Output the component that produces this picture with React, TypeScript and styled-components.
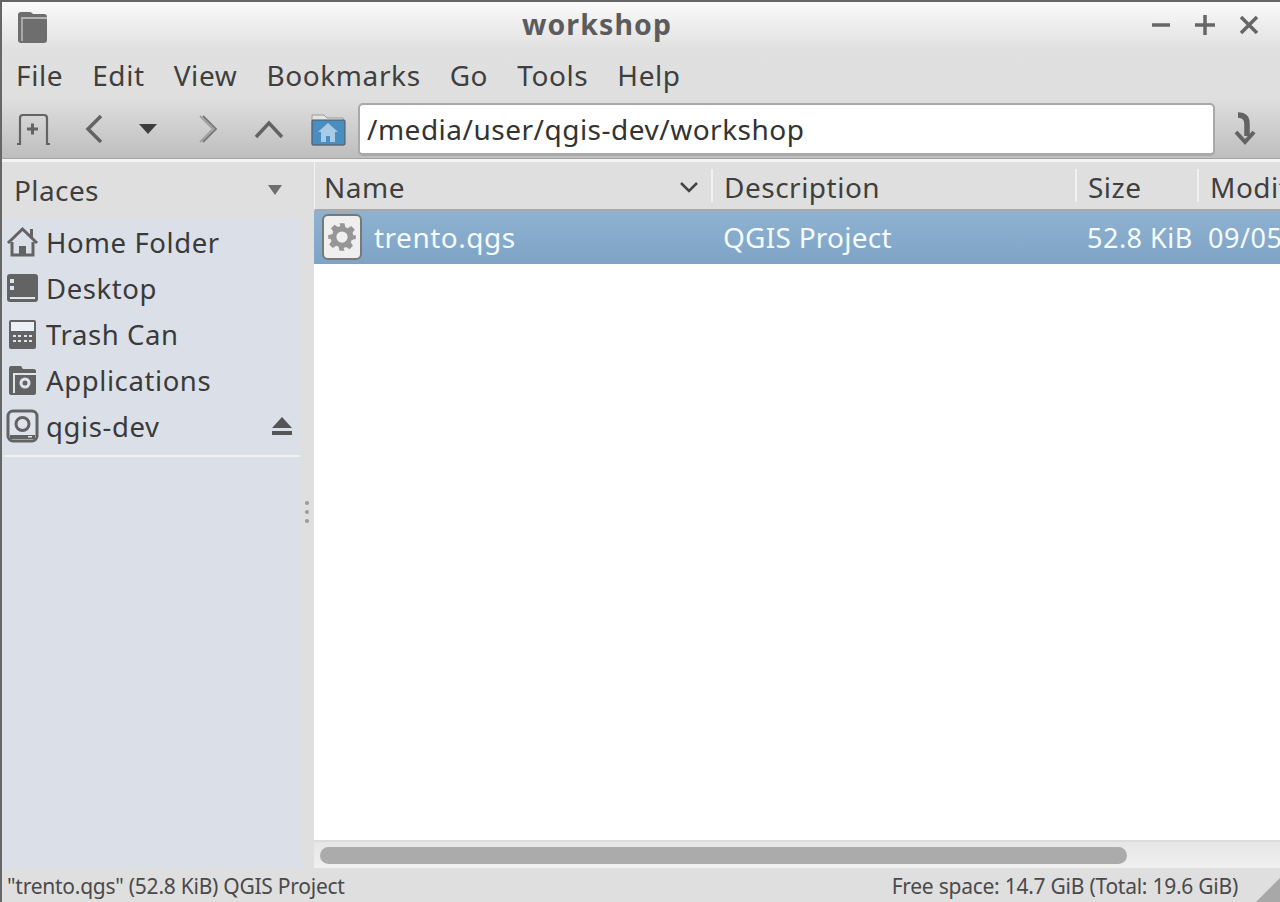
import React from "react";
import styled, { createGlobalStyle } from "styled-components";

const Global = createGlobalStyle`
  html, body { margin: 0; padding: 0; background: #dfdfdf; }
  body { font-family: "Noto Sans", "Open Sans", sans-serif; color: #3c3c3c; overflow: hidden; }
`;

const Window = styled.div`
  width: 1280px; height: 902px; box-sizing: border-box;
  border-top: 2px solid #666; border-left: 2px solid #666;
  display: flex; flex-direction: column; position: relative; overflow: hidden;
`;
const Chrome = styled.div`
  background: linear-gradient(#fafafa 0px, #e0e0e0 48px, #dfdfdf 96px, #bdbdbd 157px);
  height: 157px; box-sizing: border-box; display: flex; flex-direction: column;
  border-bottom: 1px solid #a4a4a4; flex: none;
`;
const TitleBar = styled.div`
  height: 47px; display: flex; align-items: center; position: relative; justify-content: center;
  flex: none;
`;
const AppIcon = styled.svg`
  position: absolute; left: 13px; top: 7px;
`;
const Title = styled.div`
  font-size: 28.5px; font-weight: 700; color: #5c5c5c; letter-spacing: 1.1px; padding-right: 88px; margin-top: -3px;
`;
const WinButtons = styled.div`
  position: absolute; right: 19px; top: 11px; display: flex; gap: 20px;
`;
const MenuBar = styled.div`
  height: 53px; flex: none; display: flex; align-items: center; padding-left: 14px; gap: 29px;
  box-sizing: border-box; padding-bottom: 2px;
`;
const MenuItem = styled.span`
  font-size: 28px; letter-spacing: 0.6px; color: #3f3f3f;
`;
const Toolbar = styled.div`
  flex: 1; display: flex; align-items: center; position: relative; padding-bottom: 2px; min-height: 0;
`;
const ToolIcon = styled.svg<{ $ml: number }>`
  margin-left: ${p => p.$ml}px; flex: none;
`;
const AddressBox = styled.div`
  width: 857px; height: 53px; box-sizing: border-box; margin-left: 12px; background: #fff;
  border: 2px solid #a9a9a9; border-bottom-width: 3px; border-radius: 5px; flex: none;
  display: flex; align-items: center; padding-left: 7px;
  font-size: 28px; letter-spacing: 0.5px; color: #333;
`;
const Body = styled.div`
  flex: 1; display: flex; min-height: 0; border-top: 3px solid #f4f4f4;
`;
const Sidebar = styled.div`
  width: 300px; flex: none; display: flex; flex-direction: column; background: #dbe0e8;
`;
const PlacesHeader = styled.div`
  height: 57px; background: #dfdfdf; flex: none; display: flex; align-items: center;
  justify-content: space-between; padding: 0 19px 2px 12px; font-size: 28px; letter-spacing: 0.4px; color: #3f3f3f;
  box-sizing: border-box;
`;
const PlaceRow = styled.div`
  height: 46px; display: flex; align-items: center; padding: 0 9px 0 4px; font-size: 27.5px; letter-spacing: 0.6px; color: #3a3a3a; flex: none;
  gap: 7px;
`;
const PlaceLabel = styled.span`
  flex: 1;
`;
const Separator = styled.div`
  height: 2px; margin: 6px 2px 0 2px; background: #f0f0f0; flex: none;
`;
const Grip = styled.div`
  width: 12px; flex: none; background: #dfdfdf; display: flex; flex-direction: column; align-items: center;
  justify-content: center; gap: 5px; padding-bottom: 6px;
`;
const GripDot = styled.i`
  width: 4px; height: 4px; border-radius: 50%; background: #9a9a9a; display: block; margin-right: 2px;
`;
const Main = styled.div`
  flex: 1; min-width: 0; display: flex; flex-direction: column; background: #fff;
`;
const HeaderRow = styled.div`
  height: 49px; box-sizing: border-box; flex: none; background: #dfdfdf; border-bottom: 2px solid #a9a9a9;
  border-left: 1px solid #f2f2f2; display: flex; overflow: hidden;
`;
const HeadCell = styled.div<{ $w: number; $pl: number }>`
  width: ${p => p.$w}px; flex: none; box-sizing: border-box; display: flex; align-items: center; justify-content: space-between;
  font-size: 28px; letter-spacing: 0.5px; color: #3f3f3f; padding: 2px 14px 0 ${p => p.$pl}px; position: relative; white-space: nowrap;
  &:not(:last-child)::after {
    content: ""; position: absolute; right: 0; top: 7px; bottom: 7px; width: 2px; background: #f0f0f0;
  }
`;
const FileRow = styled.div`
  height: 53px; flex: none; background: linear-gradient(#8fb2d1, #7ea3c5); display: flex; align-items: center;
  color: #f6fbff; font-size: 28px; letter-spacing: 0.5px; overflow: hidden; white-space: nowrap; padding-bottom: 1px; box-sizing: border-box;
`;
const NameCell = styled.div`
  width: 408px; flex: none; display: flex; align-items: center; gap: 12px; padding-left: 8px; box-sizing: border-box;
`;
const FileBadge = styled.div`
  width: 40px; height: 46px; box-sizing: border-box; border: 2px solid #787878; border-radius: 6px;
  background: #efefef; display: flex; align-items: center; justify-content: center; flex: none;
`;
const DescCell = styled.div`
  width: 365px; flex: none; padding-left: 1px; box-sizing: border-box; letter-spacing: 0.25px;
`;
const SizeCell = styled.div`
  width: 121px; flex: none; font-size: 27px; box-sizing: border-box;
`;
const DateCell = styled.div`
  flex: none; font-size: 27px;
`;
const Empty = styled.div`
  flex: 1;
`;
const ScrollArea = styled.div`
  height: 28px; flex: none; box-sizing: border-box; background: linear-gradient(#e6e6e6, #f0f0f0);
  border-top: 2px solid #dcdcdc; padding: 5px 0 0 6px;
`;
const ScrollThumb = styled.div`
  width: 807px; height: 17px; background: #ababab; border-radius: 9px;
`;
const StatusBar = styled.div`
  height: 34px; flex: none; background: #dfdfdf; display: flex; align-items: center; justify-content: space-between;
  padding: 2px 42px 0 5px; font-size: 21px; letter-spacing: -0.25px; color: #4a4a4a; box-sizing: border-box; position: relative;
`;
const ResizeGrip = styled.svg`
  position: absolute; right: 0; bottom: 0;
`;

const G = "#636363";

const Gear = ({ size, color }: { size: number; color: string }) => (
  <svg width={size} height={size} viewBox="0 0 24 24">
    <path fill={color} fillRule="evenodd" d="M10 1h4l.7 3.200 1.900.8 2.800-1.800 2.800 2.800-1.800 2.800.8 1.900L23 10.400v3.200l-3.200.7-.8 1.900 1.800 2.800-2.800 2.800-2.800-1.800-1.900.8L14 23h-4l-.7-3.200-1.900-.8-2.800 1.800-2.800-2.800 1.800-2.800-.8-1.900L1 13.600v-3.200l3.200-.7.8-1.900L3.200 5 6 2.200 8.800 4l1.900-.8zM12 7.500a4.500 4.500 0 1 0 0 9 4.500 4.500 0 0 0 0-9z" />
  </svg>
);

export default function App() {
  return (
    <Window>
      <Global />
      <Chrome>
        <TitleBar>
          <AppIcon width="34" height="36" viewBox="0 0 34 36">
            <path fill="#6e6e6e" d="M3 6c0-2 1-3 3-3h9c1.500 0 2 1 3 2h11c2 0 3 1 3 3v23c0 2-1 3-3 3H6c-2 0-3-1-3-3z" />
            <path fill="#a8a8a8" d="M6 10h2v22H6z" />
            <path fill="#b4b4b4" d="M6 8h26v2H6z" />
          </AppIcon>
          <Title>workshop</Title>
          <WinButtons>
            <svg width="24" height="24" viewBox="0 0 24 24"><path d="M3 12h18" stroke="#666" strokeWidth="3.500" /></svg>
            <svg width="24" height="24" viewBox="0 0 24 24"><path d="M2 12h20M12 2v20" stroke="#666" strokeWidth="3.500" /></svg>
            <svg width="24" height="24" viewBox="0 0 24 24"><path d="M4 4l16 16M20 4L4 20" stroke="#666" strokeWidth="3.500" /></svg>
          </WinButtons>
        </TitleBar>
        <MenuBar>
          {["File", "Edit", "View", "Bookmarks", "Go", "Tools", "Help"].map(m => <MenuItem key={m}>{m}</MenuItem>)}
        </MenuBar>
        <Toolbar>
          <ToolIcon $ml={14} width="36" height="34" viewBox="0 0 36 34">
            <path d="M1 32h3V6c0-2 1-3 3-3h21c2 0 3 1 3 3v26h3" fill="none" stroke={G} strokeWidth="2.200" />
            <path d="M11 17h11M16.500 11.500v11" stroke={G} strokeWidth="3" />
          </ToolIcon>
          <ToolIcon $ml={30} width="24" height="32" viewBox="0 0 24 32">
            <path d="M19 3L6 16l13 13" fill="none" stroke={G} strokeWidth="3.500" />
          </ToolIcon>
          <ToolIcon $ml={33} width="18" height="12" viewBox="0 0 18 12">
            <path d="M0 1h18L9 11z" fill="#3d3d3d" />
          </ToolIcon>
          <ToolIcon $ml={40} width="24" height="32" viewBox="0 0 24 32">
            <path d="M6 3l13 13L6 29" fill="none" stroke="#777" strokeWidth="1.800" />
            <path d="M3 3l13 13L3 29" fill="none" stroke="#a0a0a0" strokeWidth="1.800" />
          </ToolIcon>
          <ToolIcon $ml={33} width="30" height="22" viewBox="0 0 30 22">
            <path d="M2 19L15 5l13 14" fill="none" stroke={G} strokeWidth="3.500" />
          </ToolIcon>
          <ToolIcon $ml={26} width="36" height="36" viewBox="0 0 36 36">
            <path fill="#e4e4e4" stroke="#9a9a9a" d="M2 4h12l3 3h16v27H2z" />
            <rect x="2" y="9" width="33" height="25" rx="1" fill="#4a8dc0" stroke="#555" />
            <path d="M18 12L8 21h3v10h5v-6h4v6h5V21h3z" fill="#a8cbe6" />
          </ToolIcon>
          <AddressBox>/media/user/qgis-dev/workshop</AddressBox>
          <ToolIcon $ml={16} width="28" height="34" viewBox="0 0 28 34">
            <path d="M7 3c6 0 9 3 9 9v12" fill="none" stroke={G} strokeWidth="5.500" />
            <path d="M5 20l9 10 9-10" fill="none" stroke={G} strokeWidth="4" />
          </ToolIcon>
        </Toolbar>
      </Chrome>
      <Body>
        <Sidebar>
          <PlacesHeader>
            Places
            <svg width="16" height="12" viewBox="0 0 16 12"><path d="M1 1h14L8 11z" fill="#6e6e6e" /></svg>
          </PlacesHeader>
          <PlaceRow>
            <svg width="33" height="34" viewBox="0 0 33 34">
              <path d="M2 18L16.500 4 31 18" fill="none" stroke={G} strokeWidth="3" />
              <path d="M6 17v13h21V17" fill="none" stroke={G} strokeWidth="3" />
              <path d="M13 30v-9h7v9z" fill={G} />
              <path d="M24 4h3v8h-3z" fill={G} />
            </svg>
            <PlaceLabel>Home Folder</PlaceLabel>
          </PlaceRow>
          <PlaceRow>
            <svg width="33" height="34" viewBox="0 0 33 34">
              <rect x="1" y="3" width="31" height="28" rx="3" fill={G} />
              <path d="M4 8h4v4H4zM4 15h4v4H4z" fill="#dfe3ea" />
              <path d="M4 26h25v2H4z" fill="#dfe3ea" />
            </svg>
            <PlaceLabel>Desktop</PlaceLabel>
          </PlaceRow>
          <PlaceRow>
            <svg width="33" height="34" viewBox="0 0 33 34">
              <rect x="3" y="3" width="27" height="29" rx="2" fill={G} />
              <rect x="5" y="5" width="23" height="9" fill="#eceff3" />
              <path d="M7 18h3v2H7zM12 18h3v2h-3zM18 18h3v2h-3zM23 18h3v2h-3zM7 23h3v2H7zM12 23h3v2h-3zM18 23h3v2h-3zM23 23h3v2h-3z" fill="#dfe3ea" />
            </svg>
            <PlaceLabel>Trash Can</PlaceLabel>
          </PlaceRow>
          <PlaceRow>
            <svg width="33" height="34" viewBox="0 0 33 34">
              <path d="M3 5c0-1 1-2 2-2h10l2 3h11c1 0 2 1 2 2v22c0 1-1 2-2 2H5c-1 0-2-1-2-2z" fill={G} />
              <path d="M7 10h23v2H9v18H7z" fill="#dfe3ea" />
              <circle cx="19" cy="20" r="4" fill="none" stroke="#dfe3ea" strokeWidth="3" />
            </svg>
            <PlaceLabel>Applications</PlaceLabel>
          </PlaceRow>
          <PlaceRow>
            <svg width="33" height="34" viewBox="0 0 33 34">
              <rect x="2" y="2" width="29" height="30" rx="5" fill="#dfe3ea" stroke={G} strokeWidth="3" />
              <circle cx="16.500" cy="15" r="6.500" fill="none" stroke={G} strokeWidth="3" />
              <path d="M4 26h25v4H4z" fill={G} />
              <path d="M22 27h4v1.500h-4z" fill="#dfe3ea" />
            </svg>
            <PlaceLabel>qgis-dev</PlaceLabel>
            <svg width="22" height="22" viewBox="0 0 22 22">
              <path d="M11 2L21 13H1z" fill="#555" />
              <path d="M1 16h20v4H1z" fill="#555" />
            </svg>
          </PlaceRow>
          <Separator />
        </Sidebar>
        <Grip>
          <GripDot /><GripDot /><GripDot />
        </Grip>
        <Main>
          <HeaderRow>
            <HeadCell $w={398} $pl={9}>
              Name
              <svg width="20" height="12" viewBox="0 0 20 12"><path d="M2 2l8 8 8-8" fill="none" stroke="#444" strokeWidth="2.500" /></svg>
            </HeadCell>
            <HeadCell $w={364} $pl={11}>Description</HeadCell>
            <HeadCell $w={122} $pl={11}>Size</HeadCell>
            <HeadCell $w={120} $pl={11}>Modified</HeadCell>
          </HeaderRow>
          <FileRow>
            <NameCell>
              <FileBadge><Gear size={30} color="#969696" /></FileBadge>
              trento.qgs
            </NameCell>
            <DescCell>QGIS Project</DescCell>
            <SizeCell>52.8 KiB</SizeCell>
            <DateCell>09/05/2017</DateCell>
          </FileRow>
          <Empty />
          <ScrollArea><ScrollThumb /></ScrollArea>
        </Main>
      </Body>
      <StatusBar>
        <span>"trento.qgs" (52.8 KiB) QGIS Project</span>
        <span>Free space: 14.7 GiB (Total: 19.6 GiB)</span>
        <ResizeGrip width="24" height="24" viewBox="0 0 24 24"><path d="M24 0v24H0z" fill="#a8a8a8" /></ResizeGrip>
      </StatusBar>
    </Window>
  );
}
